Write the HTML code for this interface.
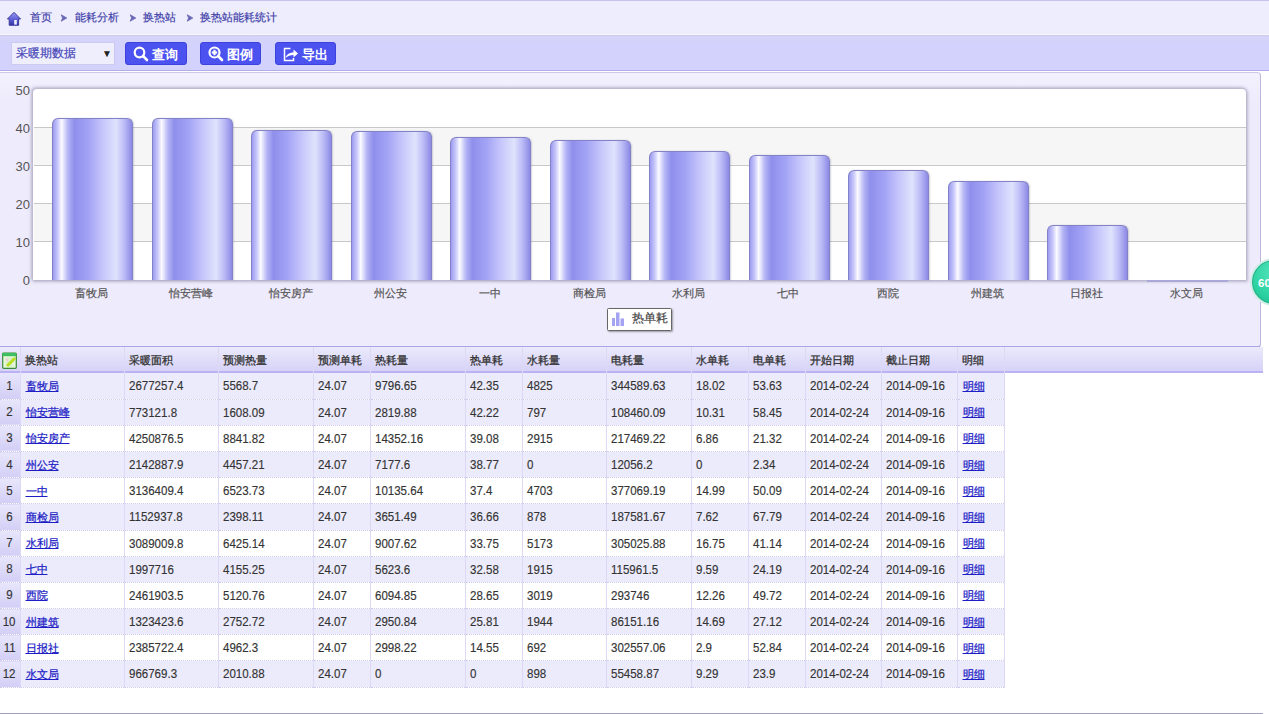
<!DOCTYPE html><html><head><meta charset="utf-8"><style>
*{margin:0;padding:0;box-sizing:border-box}
html,body{width:1269px;height:714px;overflow:hidden;background:#fff;font-family:"Liberation Sans",sans-serif;font-size:12px;color:#333}
.a{position:absolute}
#crumb{left:0;top:0;width:1269px;height:35px;background:#eeedfd;border-top:1px solid #c6c2f0}
#crumb span{position:absolute;top:8.5px;color:#4444aa;font-size:11.4px;line-height:14px;white-space:nowrap;-webkit-text-stroke:0.2px #4444aa}
#crumb .sep{color:#8b89cf;font-size:11px}
#tool{left:0;top:34px;width:1269px;height:37px;background:linear-gradient(#d6d4f7,#d2d2fc 8px);border-top:1px solid #f8f7ff;box-shadow:inset 0 1px 0 #d0ccee;border-bottom:1px solid #b2ade6}
#sel{left:11px;top:42px;width:104px;height:23px;background:#efeefd;border:1px solid #cdcaf0;color:#4848b8;font-size:12px;line-height:21px;padding-left:4px;-webkit-text-stroke:0.2px #4848b8}
#sel i{position:absolute;left:90px;top:0;-webkit-text-stroke:0;font-style:normal;font-size:10px;color:#222}
.btn{height:23px;background:#4c52ef;border:1px solid #3d42dc;border-radius:3px;color:#fff;font-size:13px;line-height:21px;font-weight:bold}
.btn span{top:0.5px !important}
#panel{left:0;top:72px;width:1261px;height:276px;background:linear-gradient(#f3f1fe,#eeebfc 30px);border-right:1.5px solid #bcb7de;border-bottom:2px solid #aaa4e8;border-top:1px solid #cdc9ea;border-top-right-radius:4px;border-bottom-right-radius:4px}
#plot{left:33px;top:89px;width:1213px;height:191px;background:#fff;border-radius:4px 4px 0 0;box-shadow:-1px -1px 3px 0.5px rgba(100,100,130,.32),1px 1px 3px 0.5px rgba(100,100,130,.32)}
.band{position:absolute;left:34px;width:1212px;background:#f6f6f6}
.grid{position:absolute;left:34px;width:1212px;height:1px;background:#c8c8c8}
.ylab{position:absolute;width:30px;left:0;text-align:right;color:#555;font-size:13px;line-height:14px}
.bar{position:absolute;border:1px solid #8482c6;box-shadow:1px 0 1.5px rgba(80,80,120,.25);border-bottom:none;border-radius:6px 6px 0 0;
 background:linear-gradient(to right,#9d9cf0 0%,#c8c8fb 6%,#fbfbff 11%,#b4b4f6 19%,#8f8fec 27%,#a3a3f6 45%,#c4c4fb 62%,#dfe3fc 80%,#bcbcf6 90%,#8c8ae6 100%)}
.xlab{position:absolute;top:286px;width:100px;text-align:center;color:#555;font-size:11px;line-height:14px;-webkit-text-stroke:0.2px #555;margin-left:-1px}
#legend{left:607px;top:308px;width:65px;height:23px;background:#fff;border:1px solid #666;border-radius:1.5px;box-shadow:1px 1px 2px rgba(0,0,0,.35)}
table{position:absolute;left:0;top:347px;border-collapse:collapse;table-layout:fixed}
#hdr{left:0;top:347px;width:1263px;height:26px;background:linear-gradient(#ebeafb,#d6d2f8);border-bottom:2px solid #bab2f3}
td{height:auto;padding:1px 0 0 4px;white-space:nowrap;overflow:hidden;border-right:1px solid #ddd9f4;border-bottom:1px dotted #cfcbef;line-height:23px;font-size:11.5px;color:#333}
tr{height:26.18px}
.c{font-size:11px}
.t{display:inline-block;font-size:12.8px;transform:scaleX(0.9);transform-origin:0 50%;-webkit-text-stroke:0.15px #333;color:#333}
td.n .t{transform-origin:50% 50%}
tr.h{height:26px}
tr.h td{border-bottom:none;color:#333}
tr.h .c{font-size:11.4px;-webkit-text-stroke:0.3px #333;color:#333}
tr.odd td{background:#ecebfb}
tr.even td{background:#fff}
td.n{text-align:center;padding:0 1px 0 0;background:linear-gradient(#e8e6fb,#d2cef6) !important;color:#444}
td a{color:#1e1ec6;text-decoration:underline;-webkit-text-stroke:0.25px #1e1ec6;margin-left:1px;font-size:11.3px}
#green{left:1250px;top:258px;width:48px;height:48px;border-radius:50%;background:radial-gradient(circle at 50% 30%,#52e4ba,#2cd2a2 60%,#1fb88c);border:2px solid #d2ece6;box-shadow:inset 0 0 0 1px #26ae88;color:#fff;font-weight:bold;font-size:11.5px;line-height:47px;padding-left:6px}
#bline{left:0;top:713px;width:1263px;height:1px;background:#a2a0c2}
</style></head><body>
<div id="crumb" class="a">
<svg class="a" style="left:7px;top:10px" width="15" height="16" viewBox="0 0 15 16"><defs><linearGradient id="hg" x1="0" y1="0" x2="0" y2="1"><stop offset="0" stop-color="#9a9af0"/><stop offset="0.5" stop-color="#6464d8"/><stop offset="1" stop-color="#3434a8"/></linearGradient></defs><path d="M7 1.3 L13.6 8 L11.6 8 L11.6 14.3 L2.2 14.3 L2.2 8 L0.4 8 Z" fill="url(#hg)" stroke="#34349a" stroke-width="0.9" stroke-linejoin="round"/><rect x="7.2" y="9" width="2.6" height="4.6" fill="#f0f0ff"/></svg>
<span style="left:30px">首页</span><svg class="a" style="left:60px;top:13px" width="8" height="8" viewBox="0 0 8 8"><path d="M1.2 0.8 L6.8 4 L1.2 7.2 L2.6 4 Z" fill="#6a68b4" stroke="#6a68b4" stroke-width="0.8" stroke-linejoin="round"/></svg><span style="left:75px">能耗分析</span><svg class="a" style="left:129px;top:13px" width="8" height="8" viewBox="0 0 8 8"><path d="M1.2 0.8 L6.8 4 L1.2 7.2 L2.6 4 Z" fill="#6a68b4" stroke="#6a68b4" stroke-width="0.8" stroke-linejoin="round"/></svg><span style="left:143px">换热站</span><svg class="a" style="left:186px;top:13px" width="8" height="8" viewBox="0 0 8 8"><path d="M1.2 0.8 L6.8 4 L1.2 7.2 L2.6 4 Z" fill="#6a68b4" stroke="#6a68b4" stroke-width="0.8" stroke-linejoin="round"/></svg><span style="left:200px">换热站能耗统计</span>
</div>
<div id="tool" class="a"></div>
<div id="sel" class="a">采暖期数据<i>▼</i></div>
<div class="a btn" style="left:125px;top:42px;width:62px"><svg class="a" style="left:7px;top:3px" width="16" height="16" viewBox="0 0 16 16"><circle cx="6.5" cy="6.5" r="4.8" fill="none" stroke="#fff" stroke-width="2.2"/><line x1="10" y1="10" x2="14" y2="14" stroke="#fff" stroke-width="2.6" stroke-linecap="round"/></svg><span class="a" style="left:26px;top:0">查询</span></div>
<div class="a btn" style="left:200px;top:42px;width:61px"><svg class="a" style="left:7px;top:3px" width="16" height="16" viewBox="0 0 16 16"><circle cx="6.5" cy="6.5" r="5" fill="none" stroke="#fff" stroke-width="2.2"/><line x1="3.8" y1="6.5" x2="9.2" y2="6.5" stroke="#fff" stroke-width="2.2"/><line x1="6.5" y1="3.8" x2="6.5" y2="9.2" stroke="#fff" stroke-width="2.2"/><line x1="10" y1="10" x2="14" y2="14" stroke="#fff" stroke-width="2.6" stroke-linecap="round"/></svg><span class="a" style="left:26px;top:0">图例</span></div>
<div class="a btn" style="left:275px;top:42px;width:61px"><svg class="a" style="left:6px;top:3px" width="17" height="16" viewBox="0 0 17 16"><path d="M8.5 2.5 H2.5 V14.5 H11.5 V12" fill="none" stroke="#fff" stroke-width="1.5"/><path d="M3.5 12 C4.5 8 8 6.5 11.5 6.5 V3.5 L16 7.6 L11.5 11.5 V9 C8.5 9 5.5 10 3.5 12 Z" fill="#fff"/></svg><span class="a" style="left:26px;top:0">导出</span></div>
<div id="panel" class="a"></div>
<div id="plot" class="a"></div>
<div class="band" style="top:203px;height:38px"></div>
<div class="band" style="top:127px;height:38px"></div>
<div class="grid" style="top:241px"></div>
<div class="grid" style="top:203px"></div>
<div class="grid" style="top:165px"></div>
<div class="grid" style="top:127px"></div>
<div class="ylab" style="top:274.2px">0</div>
<div class="ylab" style="top:236.1px">10</div>
<div class="ylab" style="top:198.1px">20</div>
<div class="ylab" style="top:160.0px">30</div>
<div class="ylab" style="top:122.0px">40</div>
<div class="ylab" style="top:83.9px">50</div>
<div class="bar" style="left:52.0px;top:117.7px;width:81px;height:162.3px"></div>
<div class="xlab" style="left:42.5px">畜牧局</div>
<div class="bar" style="left:151.5px;top:118.2px;width:81px;height:161.8px"></div>
<div class="xlab" style="left:142.0px">怡安营峰</div>
<div class="bar" style="left:251.0px;top:130.2px;width:81px;height:149.8px"></div>
<div class="xlab" style="left:241.5px">怡安房产</div>
<div class="bar" style="left:350.5px;top:131.4px;width:81px;height:148.6px"></div>
<div class="xlab" style="left:341.0px">州公安</div>
<div class="bar" style="left:450.0px;top:136.7px;width:81px;height:143.3px"></div>
<div class="xlab" style="left:440.5px">一中</div>
<div class="bar" style="left:549.5px;top:139.6px;width:81px;height:140.4px"></div>
<div class="xlab" style="left:540.0px">商检局</div>
<div class="bar" style="left:649.0px;top:150.8px;width:81px;height:129.2px"></div>
<div class="xlab" style="left:639.5px">水利局</div>
<div class="bar" style="left:748.5px;top:155.3px;width:81px;height:124.7px"></div>
<div class="xlab" style="left:739.0px">七中</div>
<div class="bar" style="left:848.0px;top:170.4px;width:81px;height:109.6px"></div>
<div class="xlab" style="left:838.5px">西院</div>
<div class="bar" style="left:947.5px;top:181.3px;width:81px;height:98.7px"></div>
<div class="xlab" style="left:938.0px">州建筑</div>
<div class="bar" style="left:1047.0px;top:224.7px;width:81px;height:55.3px"></div>
<div class="xlab" style="left:1037.5px">日报社</div>
<div class="a" style="left:1146.5px;top:280.0px;width:81px;height:1.5px;background:#aaa8d8"></div>
<div class="xlab" style="left:1137.0px">水文局</div>
<div id="legend" class="a"><svg class="a" style="left:4px;top:3px" width="13" height="15" viewBox="0 0 13 15"><rect x="0" y="6" width="3" height="8" fill="#a4a2f2"/><rect x="4" y="0.5" width="3.5" height="13.5" fill="#a4a2f2"/><rect x="8.5" y="6.5" width="3.5" height="7.5" fill="#a4a2f2"/></svg><span class="a" style="left:24px;top:2px;color:#444;font-size:11.5px;line-height:14px;-webkit-text-stroke:0.2px #444">热单耗</span></div>
<div id="hdr" class="a"></div>
<table>
<colgroup><col style="width:20px"><col style="width:104px"><col style="width:94px"><col style="width:95px"><col style="width:57px"><col style="width:95px"><col style="width:57px"><col style="width:84px"><col style="width:85px"><col style="width:57px"><col style="width:57px"><col style="width:76px"><col style="width:76px"><col style="width:47px"></colgroup>
<tr class="h"><td class="n" style="background:transparent !important"><svg width="15" height="17" viewBox="0 0 15 17" style="vertical-align:middle"><rect x="0.7" y="1" width="13.6" height="15.3" rx="1" fill="#e6f8d8" stroke="#3a8a3a" stroke-width="1.2"/><rect x="0.7" y="1" width="13.6" height="3.2" fill="#3cc060"/><path d="M3 7 H12 M3 10 H12 M3 13 H12 M6 5 V15 M9 5 V15" stroke="#c8e8c0" stroke-width="0.7"/><path d="M5 14 L13 6" stroke="#b8e020" stroke-width="3"/><path d="M4.5 6.5 L5.5 9" stroke="#f0c8e8" stroke-width="2"/></svg></td><td style="background:transparent"><span class="c">换热站</span></td><td style="background:transparent"><span class="c">采暖面积</span></td><td style="background:transparent"><span class="c">预测热量</span></td><td style="background:transparent"><span class="c">预测单耗</span></td><td style="background:transparent"><span class="c">热耗量</span></td><td style="background:transparent"><span class="c">热单耗</span></td><td style="background:transparent"><span class="c">水耗量</span></td><td style="background:transparent"><span class="c">电耗量</span></td><td style="background:transparent"><span class="c">水单耗</span></td><td style="background:transparent"><span class="c">电单耗</span></td><td style="background:transparent"><span class="c">开始日期</span></td><td style="background:transparent"><span class="c">截止日期</span></td><td style="background:transparent"><span class="c">明细</span></td></tr>
<tr class="odd"><td class="n"><span class="t">1</span></td><td><a class="c">畜牧局</a></td><td><span class="t">2677257.4</span></td><td><span class="t">5568.7</span></td><td><span class="t">24.07</span></td><td><span class="t">9796.65</span></td><td><span class="t">42.35</span></td><td><span class="t">4825</span></td><td><span class="t">344589.63</span></td><td><span class="t">18.02</span></td><td><span class="t">53.63</span></td><td><span class="t">2014-02-24</span></td><td><span class="t">2014-09-16</span></td><td><a class="c">明细</a></td></tr>
<tr class="odd"><td class="n"><span class="t">2</span></td><td><a class="c">怡安营峰</a></td><td><span class="t">773121.8</span></td><td><span class="t">1608.09</span></td><td><span class="t">24.07</span></td><td><span class="t">2819.88</span></td><td><span class="t">42.22</span></td><td><span class="t">797</span></td><td><span class="t">108460.09</span></td><td><span class="t">10.31</span></td><td><span class="t">58.45</span></td><td><span class="t">2014-02-24</span></td><td><span class="t">2014-09-16</span></td><td><a class="c">明细</a></td></tr>
<tr class="even"><td class="n"><span class="t">3</span></td><td><a class="c">怡安房产</a></td><td><span class="t">4250876.5</span></td><td><span class="t">8841.82</span></td><td><span class="t">24.07</span></td><td><span class="t">14352.16</span></td><td><span class="t">39.08</span></td><td><span class="t">2915</span></td><td><span class="t">217469.22</span></td><td><span class="t">6.86</span></td><td><span class="t">21.32</span></td><td><span class="t">2014-02-24</span></td><td><span class="t">2014-09-16</span></td><td><a class="c">明细</a></td></tr>
<tr class="odd"><td class="n"><span class="t">4</span></td><td><a class="c">州公安</a></td><td><span class="t">2142887.9</span></td><td><span class="t">4457.21</span></td><td><span class="t">24.07</span></td><td><span class="t">7177.6</span></td><td><span class="t">38.77</span></td><td><span class="t">0</span></td><td><span class="t">12056.2</span></td><td><span class="t">0</span></td><td><span class="t">2.34</span></td><td><span class="t">2014-02-24</span></td><td><span class="t">2014-09-16</span></td><td><a class="c">明细</a></td></tr>
<tr class="even"><td class="n"><span class="t">5</span></td><td><a class="c">一中</a></td><td><span class="t">3136409.4</span></td><td><span class="t">6523.73</span></td><td><span class="t">24.07</span></td><td><span class="t">10135.64</span></td><td><span class="t">37.4</span></td><td><span class="t">4703</span></td><td><span class="t">377069.19</span></td><td><span class="t">14.99</span></td><td><span class="t">50.09</span></td><td><span class="t">2014-02-24</span></td><td><span class="t">2014-09-16</span></td><td><a class="c">明细</a></td></tr>
<tr class="odd"><td class="n"><span class="t">6</span></td><td><a class="c">商检局</a></td><td><span class="t">1152937.8</span></td><td><span class="t">2398.11</span></td><td><span class="t">24.07</span></td><td><span class="t">3651.49</span></td><td><span class="t">36.66</span></td><td><span class="t">878</span></td><td><span class="t">187581.67</span></td><td><span class="t">7.62</span></td><td><span class="t">67.79</span></td><td><span class="t">2014-02-24</span></td><td><span class="t">2014-09-16</span></td><td><a class="c">明细</a></td></tr>
<tr class="even"><td class="n"><span class="t">7</span></td><td><a class="c">水利局</a></td><td><span class="t">3089009.8</span></td><td><span class="t">6425.14</span></td><td><span class="t">24.07</span></td><td><span class="t">9007.62</span></td><td><span class="t">33.75</span></td><td><span class="t">5173</span></td><td><span class="t">305025.88</span></td><td><span class="t">16.75</span></td><td><span class="t">41.14</span></td><td><span class="t">2014-02-24</span></td><td><span class="t">2014-09-16</span></td><td><a class="c">明细</a></td></tr>
<tr class="odd"><td class="n"><span class="t">8</span></td><td><a class="c">七中</a></td><td><span class="t">1997716</span></td><td><span class="t">4155.25</span></td><td><span class="t">24.07</span></td><td><span class="t">5623.6</span></td><td><span class="t">32.58</span></td><td><span class="t">1915</span></td><td><span class="t">115961.5</span></td><td><span class="t">9.59</span></td><td><span class="t">24.19</span></td><td><span class="t">2014-02-24</span></td><td><span class="t">2014-09-16</span></td><td><a class="c">明细</a></td></tr>
<tr class="even"><td class="n"><span class="t">9</span></td><td><a class="c">西院</a></td><td><span class="t">2461903.5</span></td><td><span class="t">5120.76</span></td><td><span class="t">24.07</span></td><td><span class="t">6094.85</span></td><td><span class="t">28.65</span></td><td><span class="t">3019</span></td><td><span class="t">293746</span></td><td><span class="t">12.26</span></td><td><span class="t">49.72</span></td><td><span class="t">2014-02-24</span></td><td><span class="t">2014-09-16</span></td><td><a class="c">明细</a></td></tr>
<tr class="odd"><td class="n"><span class="t">10</span></td><td><a class="c">州建筑</a></td><td><span class="t">1323423.6</span></td><td><span class="t">2752.72</span></td><td><span class="t">24.07</span></td><td><span class="t">2950.84</span></td><td><span class="t">25.81</span></td><td><span class="t">1944</span></td><td><span class="t">86151.16</span></td><td><span class="t">14.69</span></td><td><span class="t">27.12</span></td><td><span class="t">2014-02-24</span></td><td><span class="t">2014-09-16</span></td><td><a class="c">明细</a></td></tr>
<tr class="even"><td class="n"><span class="t">11</span></td><td><a class="c">日报社</a></td><td><span class="t">2385722.4</span></td><td><span class="t">4962.3</span></td><td><span class="t">24.07</span></td><td><span class="t">2998.22</span></td><td><span class="t">14.55</span></td><td><span class="t">692</span></td><td><span class="t">302557.06</span></td><td><span class="t">2.9</span></td><td><span class="t">52.84</span></td><td><span class="t">2014-02-24</span></td><td><span class="t">2014-09-16</span></td><td><a class="c">明细</a></td></tr>
<tr class="odd"><td class="n"><span class="t">12</span></td><td><a class="c">水文局</a></td><td><span class="t">966769.3</span></td><td><span class="t">2010.88</span></td><td><span class="t">24.07</span></td><td><span class="t">0</span></td><td><span class="t">0</span></td><td><span class="t">898</span></td><td><span class="t">55458.87</span></td><td><span class="t">9.29</span></td><td><span class="t">23.9</span></td><td><span class="t">2014-02-24</span></td><td><span class="t">2014-09-16</span></td><td><a class="c">明细</a></td></tr>
</table>
<div id="green" class="a">60</div>
<div id="bline" class="a"></div>
</body></html>
